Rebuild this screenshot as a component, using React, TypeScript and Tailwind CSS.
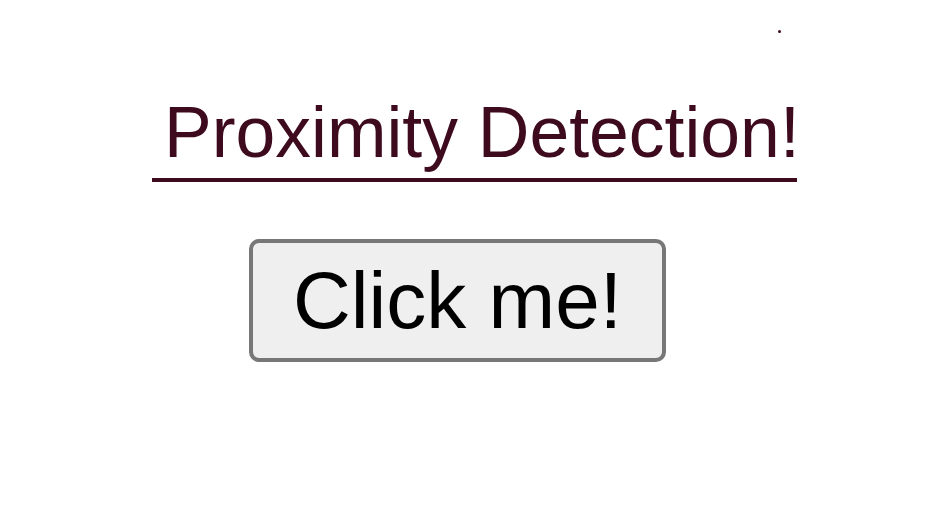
export default function App() {
  return (
    <div className="relative w-[942px] h-[520px] bg-white font-['Liberation_Sans',Arial,sans-serif] overflow-hidden">
      {/* stray dot */}
      <div className="absolute left-[778px] top-[30px] w-[3px] h-[3px] rounded-full bg-[#3d0a1e]" />

      <div className="flex flex-col items-start pt-[97px]">
        <h1 className="ml-[152px] w-[645px] pl-[12px] pb-[9px] border-b-4 border-[#3d0a1e] text-[71.5px] leading-none font-normal text-[#3d0a1e] whitespace-nowrap">
          Proximity Detection!
        </h1>

        <button className="mt-[57.5px] ml-[249px] w-[417px] h-[123px] border-4 border-[#777777] rounded-[10px] bg-[#efefef] text-black text-[80px] leading-none flex items-center justify-center">
          Click me!
        </button>
      </div>
    </div>
  )
}
